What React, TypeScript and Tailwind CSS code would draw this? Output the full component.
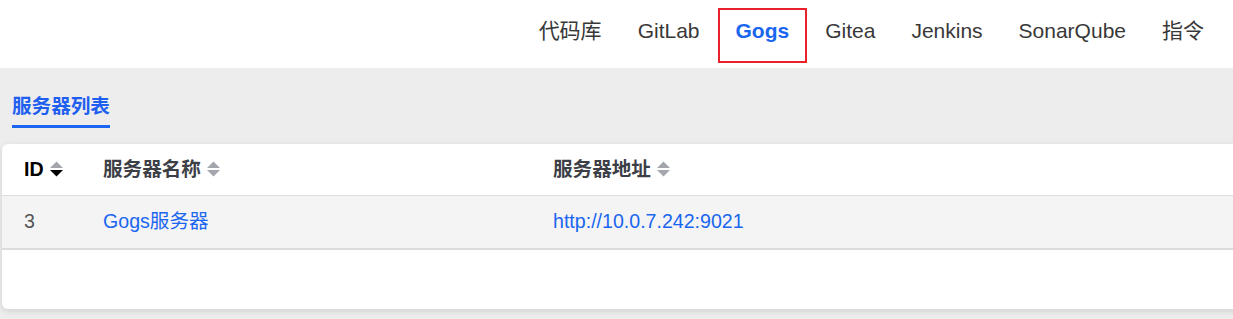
import React from 'react';

const font = { fontFamily: '"Liberation Sans", Arial, "Noto Sans CJK SC", sans-serif' };

function SortIcon({ active }: { active?: boolean }) {
  return (
    <svg width="13" height="16" viewBox="0 0 13 16" className="ml-[6px] shrink-0">
      <path d="M6.5 0.5 L13 7 L0 7 Z" fill="#a3a6ad" />
      <path d="M0 9 L13 9 L6.5 15.5 Z" fill={active ? '#000000' : '#a3a6ad'} />
    </svg>
  );
}

const navItems = ['代码库', 'GitLab', 'Gogs', 'Gitea', 'Jenkins', 'SonarQube', '指令'];

export default function App() {
  return (
    <div className="w-[1233px] h-[319px] overflow-hidden bg-[#ededed]" style={font}>
      <div className="h-[68px] bg-white flex justify-end items-start pt-[8px] pr-[11px]">
        {navItems.map(item => (
          <div
            key={item}
            className={
              item === 'Gogs'
                ? 'h-[55px] px-[16px] pb-[9px] border-2 border-[#e8212b] flex items-center text-[21px] font-bold text-[#1a66f0]'
                : 'h-[55px] px-[16px] pb-[9px] border-2 border-transparent flex items-center text-[21px] text-[#383838]'
            }
          >
            {item}
          </div>
        ))}
      </div>

      <div className="pt-[24px] px-[12px]">
        <div className="inline-block text-[19.6px] leading-[28px] font-bold text-[#1f5ff0] border-b-[3px] border-[#1a66f0] pb-[5px]">
          服务器列表
        </div>
      </div>

      <div className="mt-[16px] ml-[2px] w-[1260px] bg-white rounded-[6px] shadow-[0_2px_6px_rgba(0,0,0,0.12)] pb-[59px]">
        <div className="grid grid-cols-[79px_450px_1fr] h-[52px] border-b border-[#dedede] items-center text-[19.6px] font-bold">
          <div className="pl-[22px] flex items-center text-black">ID<SortIcon active /></div>
          <div className="pl-[22px] flex items-center text-[#3d3f47]">服务器名称<SortIcon /></div>
          <div className="pl-[22px] flex items-center text-[#3d3f47]">服务器地址<SortIcon /></div>
        </div>
        <div className="grid grid-cols-[79px_450px_1fr] h-[54px] bg-[#f4f4f4] border-b-2 border-[#dcdcdc] items-center text-[19.6px]">
          <div className="pl-[22px] text-[#555555]">3</div>
          <div className="pl-[22px] text-[#1a66f0]">Gogs服务器</div>
          <div className="pl-[22px] text-[#1a66f0]">http://10.0.7.242:9021</div>
        </div>
      </div>
    </div>
  );
}
